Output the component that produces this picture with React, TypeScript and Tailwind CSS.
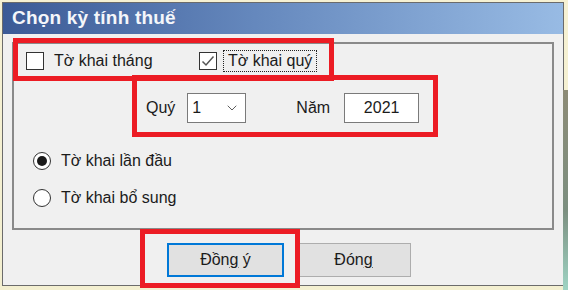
import { ChevronDown } from "lucide-react";

const font = { fontFamily: '"Liberation Sans", Arial, sans-serif' };

const Check = ({ checked }: { checked?: boolean }) => (
  <span className="flex h-[18px] w-[18px] shrink-0 items-center justify-center border border-[#333] bg-white">
    {checked && (
      <svg width="14" height="12" viewBox="0 0 14 12">
        <path d="M1.5 6.5 L5 10 L12.5 1.5" fill="none" stroke="#555" strokeWidth="1.5" />
      </svg>
    )}
  </span>
);

const Radio = ({ on }: { on?: boolean }) => (
  <span className="flex h-[18px] w-[18px] shrink-0 items-center justify-center rounded-full border border-[#333] bg-white">
    {on && <span className="h-[10px] w-[10px] rounded-full bg-[#1a1a1a]" />}
  </span>
);

export default function App() {
  return (
    <div
      className="relative h-[290px] w-[568px] overflow-hidden bg-[linear-gradient(180deg,#f6f1d3_0%,#f3efd0_100%)] pl-[2px] pt-[2px] text-[16px] text-[#1b1b1b]"
      style={font}
    >
      {/* desktop bits on the right */}
      <div className="absolute right-0 top-[90px] h-[200px] w-[5px] bg-[linear-gradient(180deg,#8d8b76,#7c8f80_60%,#9fd4c4)]" />

      {/* window */}
      <div className="flex h-[284px] w-[562px] flex-col border border-[#6b6b6b] bg-[#f0f0f0]">
        <div className="flex h-[31px] items-center bg-[linear-gradient(90deg,#3b5a96_0%,#6588bd_45%,#98bbe4_100%)] pl-[9px]">
          <span className="text-[19px] font-bold tracking-[0.2px] text-[#f4f6fa]">Chọn kỳ tính thuế</span>
        </div>

        <div className="flex flex-1 flex-col px-[9px] pt-[8px]">
          {/* group box */}
          <div className="flex h-[188px] flex-col border-2 border-[#8a8a8a] pl-[12px] pt-[6px]">
            <div className="flex h-[22px] items-center">
              <div className="flex w-[173px] items-center gap-[10px]">
                <Check />
                <span>Tờ khai tháng</span>
              </div>
              <div className="flex items-center gap-[6px]">
                <Check checked />
                <span className="flex h-[22px] items-center border border-dotted border-[#222] px-[4px]">
                  Tờ khai quý
                </span>
              </div>
            </div>

            <div className="mt-[21px] flex h-[30px] items-center pl-[120px]">
              <span>Quý</span>
              <div className="ml-[12px] flex h-[30px] w-[59px] items-center justify-between border border-[#7a7a7a] bg-white pl-[4px] pr-[5px]">
                <span>1</span>
                <ChevronDown size={16} strokeWidth={1.3} className="text-[#444]" />
              </div>
              <span className="ml-[50px]">Năm</span>
              <div className="ml-[14px] flex h-[30px] w-[75px] items-center justify-center border border-[#7a7a7a] bg-white">
                2021
              </div>
            </div>

            <div className="mt-[27px] flex h-[22px] items-center gap-[10px] pl-[7px]">
              <Radio on />
              <span>Tờ khai lần đầu</span>
            </div>
            <div className="mt-[15px] flex h-[22px] items-center gap-[10px] pl-[7px]">
              <Radio />
              <span>Tờ khai bổ sung</span>
            </div>
          </div>

          {/* buttons */}
          <div className="mt-[13px] flex gap-[12px] pl-[155px]">
            <button className="flex h-[34px] w-[117px] items-center justify-center border-2 border-[#0078d7] bg-[#e1e1e1]">
              <span>
                Đồn<span className="underline underline-offset-2">g</span> ý
              </span>
            </button>
            <button className="flex h-[34px] w-[115px] items-center justify-center border border-[#adadad] bg-[#e1e1e1]">
              <span>
                Đón<span className="underline underline-offset-2">g</span>
              </span>
            </button>
          </div>
        </div>
      </div>

      {/* red highlight boxes */}
      <div className="absolute left-[13px] top-[38px] h-[43px] w-[321px] border-[5px] border-[#ec1c24]" />
      <div className="absolute left-[132px] top-[75px] h-[62px] w-[306px] border-[5px] border-[#ec1c24]" />
      <div className="absolute left-[140px] top-[229px] h-[59px] w-[160px] border-[5px] border-[#ec1c24]" />
    </div>
  );
}
